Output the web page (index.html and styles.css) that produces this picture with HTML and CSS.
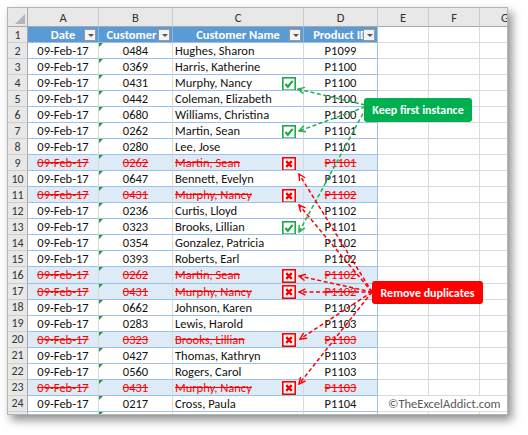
FILE: index.html
```html
<!DOCTYPE html>
<html>
<head>
<meta charset="utf-8">
<link rel="stylesheet" href="styles.css">
</head>
<body>
<div class="sheet">
  <div class="row hdr">
    <div class="rh corner"></div>
    <div class="ch a">A</div><div class="ch b">B</div><div class="ch c">C</div><div class="ch d">D</div>
    <div class="ch e">E</div><div class="ch f">F</div><div class="ch g">G</div>
  </div>
  <div class="row">
    <div class="rh">1</div>
    <div class="th a"><span class="lbl">Date</span><i class="dd"></i></div>
    <div class="th b"><span class="lbl">Customer</span><i class="dd"></i></div>
    <div class="th c"><span class="lbl">Customer Name</span><i class="dd"></i></div>
    <div class="th d"><span class="lbl">Product ID</span><i class="dd"></i></div>
    <div class="gc e"></div><div class="gc f"></div><div class="gc g"></div>
  </div>
  <div class="row"><div class="rh">2</div><div class="t a">09-Feb-17</div><div class="t b">0484</div><div class="t c"><span>Hughes, Sharon</span></div><div class="t d">P1099</div><div class="gc e"></div><div class="gc f"></div><div class="gc g"></div></div>
  <div class="row"><div class="rh">3</div><div class="t a">09-Feb-17</div><div class="t b">0369</div><div class="t c"><span>Harris, Katherine</span></div><div class="t d">P1100</div><div class="gc e"></div><div class="gc f"></div><div class="gc g"></div></div>
  <div class="row"><div class="rh">4</div><div class="t a">09-Feb-17</div><div class="t b">0431</div><div class="t c"><span>Murphy, Nancy</span><svg class="mk" viewBox="0 0 14 14"><rect x=".8" y=".8" width="12.4" height="12.4" fill="#fff" stroke="#1fa64a" stroke-width="1.6"/><path d="M3.4 6.9 5.9 9.7 10.7 3.9" fill="none" stroke="#1fa64a" stroke-width="2.2"/></svg></div><div class="t d">P1100</div><div class="gc e"></div><div class="gc f"></div><div class="gc g"></div></div>
  <div class="row"><div class="rh">5</div><div class="t a">09-Feb-17</div><div class="t b">0442</div><div class="t c"><span>Coleman, Elizabeth</span></div><div class="t d">P1100</div><div class="gc e"></div><div class="gc f"></div><div class="gc g"></div></div>
  <div class="row"><div class="rh">6</div><div class="t a">09-Feb-17</div><div class="t b">0680</div><div class="t c"><span>Williams, Christina</span></div><div class="t d">P1100</div><div class="gc e"></div><div class="gc f"></div><div class="gc g"></div></div>
  <div class="row"><div class="rh">7</div><div class="t a">09-Feb-17</div><div class="t b">0262</div><div class="t c"><span>Martin, Sean</span><svg class="mk" viewBox="0 0 14 14"><rect x=".8" y=".8" width="12.4" height="12.4" fill="#fff" stroke="#1fa64a" stroke-width="1.6"/><path d="M3.4 6.9 5.9 9.7 10.7 3.9" fill="none" stroke="#1fa64a" stroke-width="2.2"/></svg></div><div class="t d">P1101</div><div class="gc e"></div><div class="gc f"></div><div class="gc g"></div></div>
  <div class="row"><div class="rh">8</div><div class="t a">09-Feb-17</div><div class="t b">0280</div><div class="t c"><span>Lee, Jose</span></div><div class="t d">P1101</div><div class="gc e"></div><div class="gc f"></div><div class="gc g"></div></div>
  <div class="row dup"><div class="rh">9</div><div class="t a">09-Feb-17</div><div class="t b">0262</div><div class="t c"><span>Martin, Sean</span><svg class="mk" viewBox="0 0 14 14"><rect x=".8" y=".8" width="12.4" height="12.4" fill="#fff" stroke="#f00" stroke-width="1.6"/><path d="M4.2 4.2 9.8 9.8M9.8 4.2 4.2 9.8" stroke="#f00" stroke-width="2.5"/></svg></div><div class="t d">P1101</div><div class="gc e"></div><div class="gc f"></div><div class="gc g"></div></div>
  <div class="row"><div class="rh">10</div><div class="t a">09-Feb-17</div><div class="t b">0647</div><div class="t c"><span>Bennett, Evelyn</span></div><div class="t d">P1101</div><div class="gc e"></div><div class="gc f"></div><div class="gc g"></div></div>
  <div class="row dup"><div class="rh">11</div><div class="t a">09-Feb-17</div><div class="t b">0431</div><div class="t c"><span>Murphy, Nancy</span><svg class="mk" viewBox="0 0 14 14"><rect x=".8" y=".8" width="12.4" height="12.4" fill="#fff" stroke="#f00" stroke-width="1.6"/><path d="M4.2 4.2 9.8 9.8M9.8 4.2 4.2 9.8" stroke="#f00" stroke-width="2.5"/></svg></div><div class="t d">P1102</div><div class="gc e"></div><div class="gc f"></div><div class="gc g"></div></div>
  <div class="row"><div class="rh">12</div><div class="t a">09-Feb-17</div><div class="t b">0236</div><div class="t c"><span>Curtis, Lloyd</span></div><div class="t d">P1102</div><div class="gc e"></div><div class="gc f"></div><div class="gc g"></div></div>
  <div class="row"><div class="rh">13</div><div class="t a">09-Feb-17</div><div class="t b">0323</div><div class="t c"><span>Brooks, Lillian</span><svg class="mk" viewBox="0 0 14 14"><rect x=".8" y=".8" width="12.4" height="12.4" fill="#fff" stroke="#1fa64a" stroke-width="1.6"/><path d="M3.4 6.9 5.9 9.7 10.7 3.9" fill="none" stroke="#1fa64a" stroke-width="2.2"/></svg></div><div class="t d">P1101</div><div class="gc e"></div><div class="gc f"></div><div class="gc g"></div></div>
  <div class="row"><div class="rh">14</div><div class="t a">09-Feb-17</div><div class="t b">0354</div><div class="t c"><span>Gonzalez, Patricia</span></div><div class="t d">P1102</div><div class="gc e"></div><div class="gc f"></div><div class="gc g"></div></div>
  <div class="row"><div class="rh">15</div><div class="t a">09-Feb-17</div><div class="t b">0393</div><div class="t c"><span>Roberts, Earl</span></div><div class="t d">P1102</div><div class="gc e"></div><div class="gc f"></div><div class="gc g"></div></div>
  <div class="row dup"><div class="rh">16</div><div class="t a">09-Feb-17</div><div class="t b">0262</div><div class="t c"><span>Martin, Sean</span><svg class="mk" viewBox="0 0 14 14"><rect x=".8" y=".8" width="12.4" height="12.4" fill="#fff" stroke="#f00" stroke-width="1.6"/><path d="M4.2 4.2 9.8 9.8M9.8 4.2 4.2 9.8" stroke="#f00" stroke-width="2.5"/></svg></div><div class="t d">P1102</div><div class="gc e"></div><div class="gc f"></div><div class="gc g"></div></div>
  <div class="row dup"><div class="rh">17</div><div class="t a">09-Feb-17</div><div class="t b">0431</div><div class="t c"><span>Murphy, Nancy</span><svg class="mk" viewBox="0 0 14 14"><rect x=".8" y=".8" width="12.4" height="12.4" fill="#fff" stroke="#f00" stroke-width="1.6"/><path d="M4.2 4.2 9.8 9.8M9.8 4.2 4.2 9.8" stroke="#f00" stroke-width="2.5"/></svg></div><div class="t d">P1102</div><div class="gc e"></div><div class="gc f"></div><div class="gc g"></div></div>
  <div class="row"><div class="rh">18</div><div class="t a">09-Feb-17</div><div class="t b">0662</div><div class="t c"><span>Johnson, Karen</span></div><div class="t d">P1102</div><div class="gc e"></div><div class="gc f"></div><div class="gc g"></div></div>
  <div class="row"><div class="rh">19</div><div class="t a">09-Feb-17</div><div class="t b">0283</div><div class="t c"><span>Lewis, Harold</span></div><div class="t d">P1103</div><div class="gc e"></div><div class="gc f"></div><div class="gc g"></div></div>
  <div class="row dup"><div class="rh">20</div><div class="t a">09-Feb-17</div><div class="t b">0323</div><div class="t c"><span>Brooks, Lillian</span><svg class="mk" viewBox="0 0 14 14"><rect x=".8" y=".8" width="12.4" height="12.4" fill="#fff" stroke="#f00" stroke-width="1.6"/><path d="M4.2 4.2 9.8 9.8M9.8 4.2 4.2 9.8" stroke="#f00" stroke-width="2.5"/></svg></div><div class="t d">P1103</div><div class="gc e"></div><div class="gc f"></div><div class="gc g"></div></div>
  <div class="row"><div class="rh">21</div><div class="t a">09-Feb-17</div><div class="t b">0427</div><div class="t c"><span>Thomas, Kathryn</span></div><div class="t d">P1103</div><div class="gc e"></div><div class="gc f"></div><div class="gc g"></div></div>
  <div class="row"><div class="rh">22</div><div class="t a">09-Feb-17</div><div class="t b">0560</div><div class="t c"><span>Rogers, Carol</span></div><div class="t d">P1103</div><div class="gc e"></div><div class="gc f"></div><div class="gc g"></div></div>
  <div class="row dup"><div class="rh">23</div><div class="t a">09-Feb-17</div><div class="t b">0431</div><div class="t c"><span>Murphy, Nancy</span><svg class="mk" viewBox="0 0 14 14"><rect x=".8" y=".8" width="12.4" height="12.4" fill="#fff" stroke="#f00" stroke-width="1.6"/><path d="M4.2 4.2 9.8 9.8M9.8 4.2 4.2 9.8" stroke="#f00" stroke-width="2.5"/></svg></div><div class="t d">P1103</div><div class="gc e"></div><div class="gc f"></div><div class="gc g"></div></div>
  <div class="row"><div class="rh">24</div><div class="t a">09-Feb-17</div><div class="t b">0217</div><div class="t c"><span>Cross, Paula</span></div><div class="t d">P1104</div><div class="gc wm">©TheExcelAddict.com</div></div>
  <div class="row"><div class="rh"></div><div class="t a"></div><div class="t b"></div><div class="t c"></div><div class="t d"></div><div class="gc e"></div><div class="gc f"></div><div class="gc g"></div></div>
</div>

<svg class="arrows" width="528" height="435" viewBox="0 0 528 435">
  <defs>
    <marker id="hg" viewBox="0 0 10 10" refX="9" refY="5" markerWidth="8" markerHeight="8" markerUnits="userSpaceOnUse" orient="auto">
      <path d="M1 1 9 5 1 9" fill="none" stroke="#1fb04f" stroke-width="1.8"/>
    </marker>
    <marker id="hr" viewBox="0 0 10 10" refX="9" refY="5" markerWidth="8" markerHeight="8" markerUnits="userSpaceOnUse" orient="auto">
      <path d="M1 1 9 5 1 9" fill="none" stroke="#f00" stroke-width="1.8"/>
    </marker>
  </defs>
  <g class="gl">
    <line x1="365" y1="105" x2="298" y2="89" marker-end="url(#hg)"/>
    <line x1="365" y1="107" x2="299" y2="131" marker-end="url(#hg)"/>
    <line x1="366" y1="108" x2="299" y2="232" marker-end="url(#hg)"/>
  </g>
  <g class="rl">
    <line x1="372" y1="292" x2="299" y2="174" marker-end="url(#hr)"/>
    <line x1="372" y1="292" x2="299" y2="205" marker-end="url(#hr)"/>
    <line x1="372" y1="292" x2="299" y2="276" marker-end="url(#hr)"/>
    <line x1="372" y1="292" x2="299" y2="292" marker-end="url(#hr)"/>
    <line x1="372" y1="292" x2="300" y2="339" marker-end="url(#hr)"/>
    <line x1="372" y1="292" x2="299" y2="384" marker-end="url(#hr)"/>
  </g>
</svg>
<div class="callout keep">Keep first instance</div>
<div class="callout remove">Remove duplicates</div>
</body>
</html>
```
FILE: styles.css
```css
html, body {
  margin: 0;
  padding: 0;
}
body {
  width: 528px;
  height: 435px;
  position: relative;
  overflow: hidden;
  background: #fff;
  font-family: Carlito, Lato, "Liberation Sans", sans-serif;
  font-size: 12.5px;
  color: #111;
}
.sheet {
  margin: 7px 0 0 7px;
  width: 501px;
  height: 408px;
  box-sizing: border-box;
  border: 1px solid #b5b5b5;
  overflow: hidden;
  background: #fff;
  box-shadow: 4px 5px 9px rgba(0, 0, 0, 0.45);
}
.row {
  display: flex;
  height: 16.04px;
}
.row.hdr {
  height: 19px;
}
.row > div {
  flex: none;
  box-sizing: border-box;
  height: 100%;
  display: flex;
  align-items: center;
  white-space: nowrap;
  overflow: hidden;
}
.rh {
  width: 20px;
  justify-content: center;
  background: #e8e8e8;
  border-right: 1px solid #a9a9a9;
  border-bottom: 1px solid #cfcfcf;
  color: #333;
  font-size: 12px;
}
.a { width: 71px; }
.b { width: 74px; }
.c { width: 131px; }
.d { width: 74px; }
.e, .f, .g { width: 51px; }
.wm { width: 153px; }

.ch {
  justify-content: center;
  background: #e8e8e8;
  border-right: 1px solid #c9c9c9;
  border-bottom: 1px solid #a9a9a9;
  color: #333;
  font-size: 12.5px;
}
.hdr .rh {
  border-bottom: 1px solid #a9a9a9;
}
.corner {
  position: relative;
}
.corner::after {
  content: "";
  position: absolute;
  right: 2px;
  bottom: 2px;
  width: 0;
  height: 0;
  border-left: 10px solid transparent;
  border-bottom: 10px solid #b5b5b5;
}

.th {
  position: relative;
  justify-content: center;
  background: #5b9bd5;
  color: #fff;
  font-weight: bold;
  border-right: 1px solid #8ab8e3;
  border-bottom: 1px solid #9bc2e6;
}
.th.d {
  border-right: 1px solid #9bc2e6;
}
.th.b .lbl {
  margin-right: 8px;
}
.dd {
  position: absolute;
  right: 2px;
  top: 2px;
  width: 12px;
  height: 12px;
  box-sizing: border-box;
  background: #f4f4f4;
  border: 1px solid #9a9a9a;
}
.dd::after {
  content: "";
  position: absolute;
  left: 2.5px;
  top: 4px;
  border-left: 3px solid transparent;
  border-right: 3px solid transparent;
  border-top: 3px solid #555;
}

.t {
  border-right: 1px solid #d9d9d9;
  border-bottom: 1px solid #9bc2e6;
  background: #fff;
}
.t.a, .t.b, .t.d {
  justify-content: center;
}
.t.c {
  padding-left: 2px;
  justify-content: space-between;
}
.t.d {
  border-right: 1px solid #9bc2e6;
}
.t.b {
  position: relative;
}
.t.b::before {
  content: "";
  position: absolute;
  left: 0;
  top: 0;
  width: 0;
  height: 0;
  border-top: 4px solid #1d9b3a;
  border-right: 4px solid transparent;
}
.dup .t {
  background: #ddebf7;
  color: #f00;
  text-decoration: line-through;
}
.mk {
  flex: none;
  width: 14px;
  height: 14px;
  margin: 2px 7px 0 0;
}
.gc {
  border-right: 1px solid #dadada;
  border-bottom: 1px solid #dadada;
}
.wm {
  padding-left: 10px;
  color: #595959;
  font-size: 12.5px;
}

.arrows {
  position: absolute;
  left: 0;
  top: 0;
}
.arrows line {
  fill: none;
  stroke-width: 1.5;
  stroke-dasharray: 4 2.5;
}
.gl line { stroke: #1fb04f; }
.rl line { stroke: #f00; }

.callout {
  position: absolute;
  box-sizing: border-box;
  display: flex;
  align-items: center;
  justify-content: center;
  color: #fff;
  font-weight: bold;
  font-size: 12px;
  border-radius: 3px;
  white-space: nowrap;
}
.keep {
  left: 364px;
  top: 98px;
  width: 108px;
  height: 24px;
  background: #00b050;
}
.remove {
  left: 372px;
  top: 281px;
  width: 111px;
  height: 23px;
  background: #f00;
}
```
